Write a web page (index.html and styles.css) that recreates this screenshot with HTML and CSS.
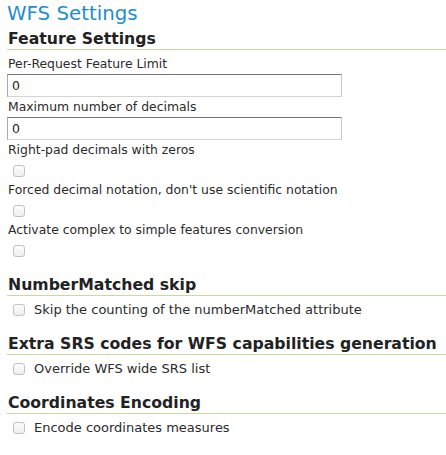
FILE: index.html
```html
<!DOCTYPE html>
<html>
<head>
<meta charset="utf-8">
<link rel="stylesheet" href="styles.css">
</head>
<body>
<div class="page">
  <h1 class="title">WFS Settings</h1>
  <section class="section">
    <h3 class="heading">Feature Settings</h3>
    <ul class="fields">
      <li class="field">
        <label class="label">Per-Request Feature Limit</label>
        <input class="text-input" type="text" value="0">
      </li>
      <li class="field">
        <label class="label">Maximum number of decimals</label>
        <input class="text-input" type="text" value="0">
      </li>
      <li class="field">
        <label class="label">Right-pad decimals with zeros</label>
        <span class="box"></span>
      </li>
      <li class="field">
        <label class="label">Forced decimal notation, don't use scientific notation</label>
        <span class="box"></span>
      </li>
      <li class="field">
        <label class="label">Activate complex to simple features conversion</label>
        <span class="box"></span>
      </li>
    </ul>
  </section>
  <section class="section">
    <h3 class="heading">NumberMatched skip</h3>
    <div class="check-row"><span class="box"></span><span class="check-label">Skip the counting of the numberMatched attribute</span></div>
  </section>
  <section class="section">
    <h3 class="heading">Extra SRS codes for WFS capabilities generation</h3>
    <div class="check-row"><span class="box"></span><span class="check-label">Override WFS wide SRS list</span></div>
  </section>
  <section class="section">
    <h3 class="heading">Coordinates Encoding</h3>
    <div class="check-row"><span class="box"></span><span class="check-label">Encode coordinates measures</span></div>
  </section>
</div>
</body>
</html>
```

FILE: styles.css
```css
* { box-sizing: border-box; }
html, body { margin: 0; padding: 0; background: #fff; }
body {
  font-family: "DejaVu Sans", Verdana, sans-serif;
  font-size: 12.4px;
  color: #2b2b2b;
}
.page {
  padding: 3px 0 0 7px;
}
.title {
  margin: 0;
  font-size: 19.8px;
  font-weight: normal;
  line-height: 22px;
  color: #1e8fcb;
}
.section {
  margin: 0;
}
.heading {
  margin: 4px 0 0 0;
  padding: 0 0 1px 1px;
  font-size: 15.7px;
  font-weight: bold;
  line-height: 19px;
  color: #222;
  border-bottom: 1px solid #c6dc9e;
}
.section + .section .heading {
  margin-top: 15px;
}
.fields {
  list-style: none;
  margin: 6px 0 0 0;
  padding: 0;
}
.field {
  display: flex;
  flex-direction: column;
  align-items: flex-start;
}
.label {
  padding-left: 1px;
  line-height: 16px;
}
.text-input {
  margin: 2px 0 2px 0;
  width: 335px;
  height: 23px;
  padding: 2px 4px;
  font-family: "DejaVu Sans", Verdana, sans-serif;
  font-size: 12.4px;
  color: #222;
  border-style: solid;
  border-width: 1px;
  border-color: #777 #c8c8c8 #d4d4d4 #aaa;
  background: #fff;
}
.box {
  display: inline-block;
  flex: none;
  width: 12px;
  height: 12px;
  border: 1px solid #c2c2c2;
  border-radius: 3px;
  background: linear-gradient(#fdfdfd, #eee);
}
.field .box {
  margin: 7px 0 5px 6px;
}
.field:last-child .box {
  margin-bottom: 3px;
}
.check-row {
  display: flex;
  align-items: flex-start;
  gap: 9px;
  padding: 5px 0 0 6px;
  font-size: 13px;
  line-height: 18px;
}
.check-row .box {
  margin-top: 3px;
}
```
